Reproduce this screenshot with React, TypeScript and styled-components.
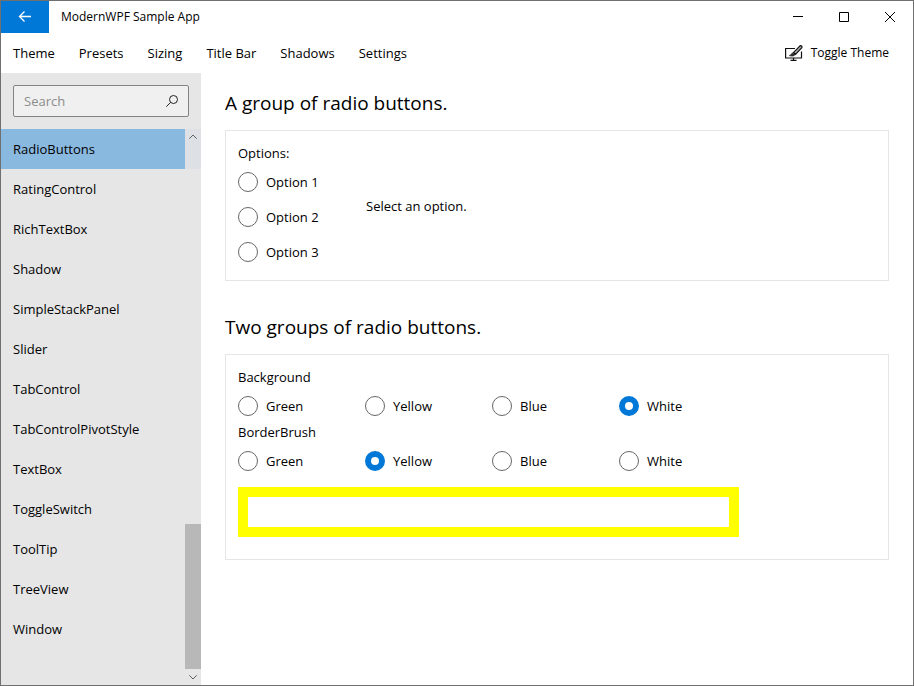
import React, { useState } from "react";
import styled, { createGlobalStyle } from "styled-components";

const GlobalStyle = createGlobalStyle`
  *, *::before, *::after { box-sizing: border-box; }
  html, body, #root { height: 100%; margin: 0; }
  body, button, input {
    font-family: "Open Sans", "Noto Sans", sans-serif;
    font-size: 13px;
    line-height: 20px;
    color: #000;
  }
  button { border: 0; padding: 0; background: transparent; }
  svg { display: block; }
`;

const AppWindow = styled.div`
  height: 100vh;
  display: flex;
  flex-direction: column;
  border: 1px solid #707070;
  background: #fff;
  overflow: hidden;
`;

const TitleBar = styled.header`
  flex: none;
  display: flex;
  height: 32px;
`;

const BackButton = styled.button`
  width: 48px;
  display: grid;
  place-items: center;
  background: #0078d7;
`;

const WindowTitle = styled.h1`
  flex: 1;
  margin: 0;
  padding-left: 12px;
  font-size: 12px;
  font-weight: 400;
  line-height: 32px;
`;

const CaptionButton = styled.button`
  width: 46px;
  display: grid;
  place-items: center;
`;

const MenuBar = styled.nav`
  flex: none;
  display: flex;
  height: 40px;
  align-items: center;
`;

const MenuButton = styled.button`
  height: 40px;
  padding: 0 12px;
`;

const ThemeButton = styled.button`
  display: flex;
  align-items: center;
  gap: 8px;
  height: 40px;
  margin-left: auto;
  padding-right: 24px;
  font-size: 12px;
`;

const Body = styled.div`
  flex: 1;
  min-height: 0;
  display: flex;
`;

const Sidebar = styled.aside`
  flex: none;
  width: 200px;
  display: flex;
  flex-direction: column;
  background: #e6e6e6;
`;

const SearchBox = styled.label`
  display: flex;
  align-items: center;
  height: 32px;
  margin: 12px;
  padding: 0 10px;
  border: 1px solid #848484;
  border-radius: 2px;
  background: #f0f0f0;
`;

const SearchInput = styled.input`
  flex: 1;
  min-width: 0;
  padding: 0;
  border: 0;
  outline: 0;
  background: transparent;
  &::placeholder { color: #8c8c8c; opacity: 1; }
`;

const ListArea = styled.div`
  position: relative;
  flex: 1;
  min-height: 0;
  overflow: hidden;
`;

const PageList = styled.ul`
  margin: 0;
  padding: 0;
  list-style: none;
`;

const PageButton = styled.button<{ $selected: boolean }>`
  display: block;
  width: 100%;
  height: 40px;
  padding: 0 12px;
  text-align: left;
  background: ${(p) => (p.$selected ? "#8ab9e0" : "transparent")};
`;

const ScrollBar = styled.div`
  position: absolute;
  top: 0;
  right: 0;
  bottom: 0;
  width: 16px;
  display: flex;
  flex-direction: column;
  background: rgba(230, 230, 230, 0.9);
`;

const ScrollArrow = styled.button`
  flex: none;
  height: 16px;
  display: grid;
  place-items: center;
`;

const ScrollTrack = styled.div`
  flex: 1;
  display: flex;
  flex-direction: column;
  justify-content: flex-end;
`;

const ScrollThumb = styled.div`
  height: 145px;
  background: #b8b8b8;
`;

const Content = styled.main`
  flex: 1;
  min-width: 0;
  padding: 0 24px;
  overflow: hidden;
`;

const Section = styled.section`
  margin-bottom: 16px;
`;

const SectionTitle = styled.h2`
  margin: 0;
  padding: 16px 0 12px;
  font-size: 19px;
  font-weight: 400;
  line-height: 29px;
`;

const Card = styled.div`
  padding: 12px;
  border: 1px solid #e6e6e6;
`;

const OptionsRow = styled.div`
  display: flex;
  align-items: center;
  gap: 8px;
`;

const Group = styled.fieldset<{ $columns: number }>`
  margin: 0;
  padding: 0;
  border: 0;
  min-width: 0;
  width: max-content;
  display: grid;
  grid-template-columns: repeat(${(p) => p.$columns}, 120px);
  gap: 3px 7px;
`;

const GroupHeader = styled.legend`
  padding: 0;
  margin-bottom: 3px;
`;

const RadioLabel = styled.label`
  display: flex;
  align-items: center;
  gap: 8px;
  height: 32px;
`;

const RadioInput = styled.input`
  appearance: none;
  flex: none;
  width: 20px;
  height: 20px;
  margin: 0;
  border: 1px solid #666;
  border-radius: 50%;
  background: #fff;
  &:checked { border: 6px solid #0078d7; }
`;

const Swatch = styled.div<{ $fill: string; $stroke: string }>`
  width: 501px;
  max-width: 100%;
  height: 50px;
  margin: 10px 0;
  border: 10px solid ${(p) => p.$stroke};
  background: ${(p) => p.$fill};
`;

type RadioGroupProps = {
  header: string;
  name: string;
  options: string[];
  columns: number;
  value: string | null;
  onChange: (value: string) => void;
};

function RadioGroup({ header, name, options, columns, value, onChange }: RadioGroupProps) {
  return (
    <Group $columns={columns}>
      <GroupHeader>{header}</GroupHeader>
      {options.map((option) => (
        <RadioLabel key={option}>
          <RadioInput type="radio" name={name} checked={value === option} onChange={() => onChange(option)} />
          {option}
        </RadioLabel>
      ))}
    </Group>
  );
}

const Chevron = ({ up = false }: { up?: boolean }) => (
  <svg width="8" height="6" viewBox="0 0 8 6" fill="none" stroke="#606060">
    <path d={up ? "M0.3 4.7 4 1 7.7 4.7" : "M0.3 1.3 4 5 7.7 1.3"} />
  </svg>
);

const menus = ["Theme", "Presets", "Sizing", "Title Bar", "Shadows", "Settings"];
const pages = [
  "RadioButtons", "RatingControl", "RichTextBox", "Shadow", "SimpleStackPanel", "Slider", "TabControl",
  "TabControlPivotStyle", "TextBox", "ToggleSwitch", "ToolTip", "TreeView", "Window",
];
const choices = ["Option 1", "Option 2", "Option 3"];
const colors = ["Green", "Yellow", "Blue", "White"];
const colorValues: Record<string, string> = { Green: "#008000", Yellow: "#ffff00", Blue: "#0000ff", White: "#ffffff" };

export default function App() {
  const [page, setPage] = useState("RadioButtons");
  const [choice, setChoice] = useState<string | null>(null);
  const [background, setBackground] = useState("White");
  const [border, setBorder] = useState("Yellow");

  return (
    <>
      <GlobalStyle />
      <AppWindow>
        <TitleBar>
          <BackButton aria-label="Back">
            <svg width="14" height="12" viewBox="0 0 14 12" fill="none" stroke="#fff" strokeWidth="1.3">
              <path d="M1.5 5.5H13M6.5 .5l-5 5 5 5" />
            </svg>
          </BackButton>
          <WindowTitle>ModernWPF Sample App</WindowTitle>
          <CaptionButton aria-label="Minimize">
            <svg width="10" height="10" viewBox="0 0 10 10" stroke="#000"><path d="M0 4.5h10" /></svg>
          </CaptionButton>
          <CaptionButton aria-label="Maximize">
            <svg width="10" height="10" viewBox="0 0 10 10" fill="none" stroke="#000"><path d="M.5.5h9v9h-9z" /></svg>
          </CaptionButton>
          <CaptionButton aria-label="Close">
            <svg width="10" height="10" viewBox="0 0 10 10" stroke="#000"><path d="M0 0l10 10M10 0 0 10" /></svg>
          </CaptionButton>
        </TitleBar>
        <MenuBar>
          {menus.map((menu) => (
            <MenuButton key={menu}>{menu}</MenuButton>
          ))}
          <ThemeButton>
            <svg width="18" height="16" viewBox="0 0 18 16" fill="none" stroke="#111" strokeWidth="1.2">
              <path d="M10 3.500H.6v9.500h15.900V6.500M8.500 13v2M5.500 15.300h6" />
              <path d="M15 .8 8.600 7.400l1.900 1.900L16.800 2.600C17.400 1.500 16 .1 15 .8z" fill="#aaa" />
              <path d="M8.300 7.700C6.300 7.900 6.500 9.800 4.300 10.600c2.300.9 5.200.6 5.800-1.200z" fill="#333" strokeWidth=".6" />
            </svg>
            Toggle Theme
          </ThemeButton>
        </MenuBar>
        <Body>
          <Sidebar>
            <SearchBox>
              <SearchInput type="search" placeholder="Search" aria-label="Search" />
              <svg width="12" height="12" viewBox="0 0 12 12" fill="none" stroke="#222">
                <circle cx="7.500" cy="4.500" r="4" /><path d="M4.600 7.400.3 11.700" />
              </svg>
            </SearchBox>
            <ListArea>
              <PageList>
                {pages.map((name) => (
                  <li key={name}>
                    <PageButton $selected={name === page} onClick={() => setPage(name)}>{name}</PageButton>
                  </li>
                ))}
              </PageList>
              <ScrollBar>
                <ScrollArrow aria-label="Scroll up"><Chevron up /></ScrollArrow>
                <ScrollTrack><ScrollThumb /></ScrollTrack>
                <ScrollArrow aria-label="Scroll down"><Chevron /></ScrollArrow>
              </ScrollBar>
            </ListArea>
          </Sidebar>
          <Content>
            <Section>
              <SectionTitle>A group of radio buttons.</SectionTitle>
              <Card>
                <OptionsRow>
                  <RadioGroup header="Options:" name="options" options={choices} columns={1} value={choice} onChange={setChoice} />
                  <span>{choice ? `You selected ${choice}` : "Select an option."}</span>
                </OptionsRow>
              </Card>
            </Section>
            <Section>
              <SectionTitle>Two groups of radio buttons.</SectionTitle>
              <Card>
                <RadioGroup header="Background" name="background" options={colors} columns={4} value={background} onChange={setBackground} />
                <RadioGroup header="BorderBrush" name="border" options={colors} columns={4} value={border} onChange={setBorder} />
                <Swatch $fill={colorValues[background]} $stroke={colorValues[border]} />
              </Card>
            </Section>
          </Content>
        </Body>
      </AppWindow>
    </>
  );
}
